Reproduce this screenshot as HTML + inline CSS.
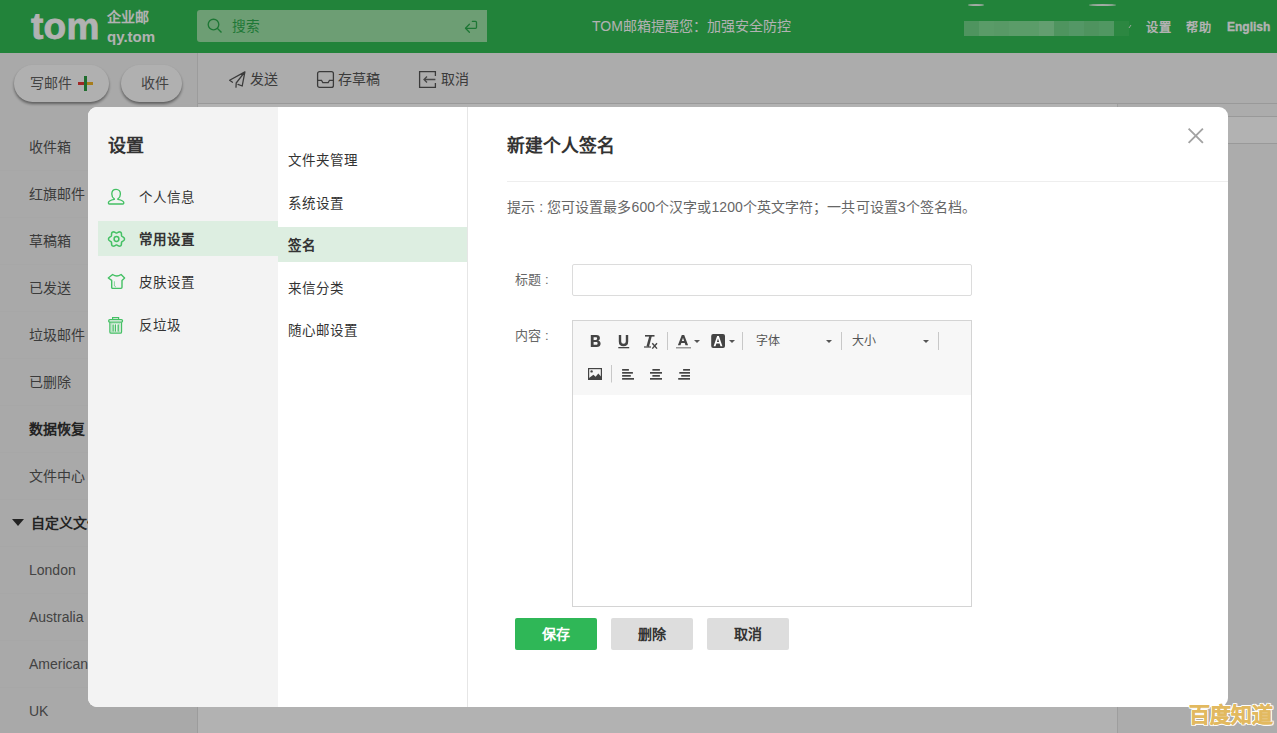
<!DOCTYPE html>
<html lang="zh-CN">
<head>
<meta charset="utf-8">
<style>
*{box-sizing:border-box;margin:0;padding:0}
html,body{width:1277px;height:733px;overflow:hidden;background:#fff;font-family:"Liberation Sans",sans-serif;color:#333}
.a{position:absolute;white-space:nowrap}
#hdr{position:absolute;left:0;top:0;width:1277px;height:53px;background:#31bc53}
.si{position:absolute;left:29px;font-size:14px;color:#555;line-height:20px;white-space:nowrap}
.sp{position:absolute;left:0;width:198px;height:1px;background:#f0f0f0}
.btn{position:absolute;top:65px;height:37px;border-radius:19px;background:#fdfdfd;box-shadow:0 2px 3px rgba(0,0,0,.45);font-size:14px;color:#606060;line-height:37px;white-space:nowrap}
.tbt{position:absolute;top:69px;font-size:14px;color:#555;line-height:20px;white-space:nowrap}
.mi{position:absolute;margin-top:1px;font-size:13.5px;letter-spacing:1px;color:#333;line-height:20px;white-space:nowrap}
.eb{position:absolute;font-size:12px;color:#555;line-height:16px}
.vs{position:absolute;width:1px;background:#ccc}
.caret{position:absolute;width:0;height:0;border-left:3px solid transparent;border-right:3px solid transparent;border-top:3px solid #555}
.bt{position:absolute;top:511px;width:82px;height:32px;border-radius:2px;font-size:14px;font-weight:bold;text-align:center;line-height:32px}
</style>
</head>
<body>
<!-- header -->
<div id="hdr">
  <div class="a" style="left:31px;top:0px;font-size:37px;font-weight:bold;color:#fff;letter-spacing:0.3px;line-height:53px;-webkit-text-stroke:0.8px #fff">tom</div>
  <div class="a" style="left:107px;top:9px;font-size:14px;font-weight:bold;color:#fff;line-height:16px">企业邮</div>
  <div class="a" style="left:107px;top:28px;font-size:15px;font-weight:bold;color:#fff;line-height:17px">qy.tom</div>
  <div class="a" style="left:197px;top:10px;width:290px;height:32px;background:#9de2a6;border-radius:3px 0 0 3px"></div>
  <svg class="a" style="left:205px;top:17px" width="20" height="18" viewBox="0 0 20 18"><circle cx="8.5" cy="7.5" r="5.3" fill="none" stroke="#2aab4c" stroke-width="1.35"/><line x1="12.3" y1="11.3" x2="16.5" y2="15.5" stroke="#2aab4c" stroke-width="1.35"/></svg>
  <div class="a" style="left:232px;top:17px;font-size:13.7px;color:#2cad4e;line-height:20px">搜索</div>
  <svg class="a" style="left:462px;top:19px" width="18" height="16" viewBox="0 0 18 16"><path d="M10.4,2.4 H13.5 Q14.5,2.4 14.5,3.4 V8.3 Q14.5,9.3 13.5,9.3 H3.6" fill="none" stroke="#2aab4c" stroke-width="1.3" stroke-linecap="round"/><path d="M7.4,5.3 L3.5,9.3 L7.4,13.3" fill="none" stroke="#2aab4c" stroke-width="1.3" stroke-linecap="round" stroke-linejoin="round"/></svg>
  <div class="a" style="left:592px;top:16px;font-size:14px;color:#fff;line-height:20px">TOM邮箱提醒您：加强安全防控</div>
  <div class="a" style="left:964px;top:21px;width:15px;height:15px;background:#71d589"></div><div class="a" style="left:979px;top:21px;width:15px;height:15px;background:#81df96"></div><div class="a" style="left:994px;top:21px;width:15px;height:15px;background:#7edc93"></div><div class="a" style="left:1009px;top:21px;width:15px;height:15px;background:#83e097"></div><div class="a" style="left:1024px;top:21px;width:15px;height:15px;background:#83e097"></div><div class="a" style="left:1039px;top:21px;width:15px;height:15px;background:#8fe3a1"></div><div class="a" style="left:1054px;top:21px;width:15px;height:15px;background:#71d589"></div><div class="a" style="left:1069px;top:21px;width:15px;height:15px;background:#79d992"></div><div class="a" style="left:1084px;top:21px;width:15px;height:15px;background:#71d389"></div><div class="a" style="left:1099px;top:21px;width:15px;height:15px;background:#75d88d"></div><div class="a" style="left:1114px;top:21px;width:15px;height:15px;background:#40c25e"></div>
  <div class="a" style="left:968px;top:4px;width:16px;height:2px;border-radius:50%;background:#e8f5ea"></div><div class="a" style="left:1089px;top:4px;width:27px;height:2px;border-radius:50%;background:#e8f5ea"></div>
  <svg class="a" style="left:1127px;top:23px" width="6" height="6" viewBox="0 0 6 6"><path d="M2,5 L4,2" stroke="#e0f0e0" stroke-width="1"/></svg>
  <div class="a" style="left:1146px;top:20px;font-size:12.2px;letter-spacing:0.8px;font-weight:bold;color:#fff;line-height:17px">设置</div>
  <div class="a" style="left:1186px;top:20px;font-size:12.2px;letter-spacing:0.8px;font-weight:bold;color:#fff;line-height:17px">帮助</div>
  <div class="a" style="left:1227px;top:19px;font-size:12px;font-weight:bold;color:#fff;line-height:17px;-webkit-text-stroke:0.3px #fff">English</div>
</div>
<!-- sidebar -->
<div class="a" style="left:0;top:53px;width:198px;height:680px;background:#f3f3f3;border-right:1px solid #e0e0e0"></div>
<div class="btn" style="left:14px;width:95px;padding-left:16px">写邮件</div>
<div class="a" style="left:78px;top:82px;width:6px;height:3px;background:#e53935"></div>
<div class="a" style="left:84px;top:76px;width:3px;height:15px;background:#2e9e43"></div>
<div class="a" style="left:87px;top:82px;width:6px;height:3px;background:#f0b429"></div>
<div class="btn" style="left:121px;width:61px;padding-left:20px">收件</div>
<div class="si" style="top:137px">收件箱</div>
<div class="sp" style="top:170px"></div>
<div class="si" style="top:184px">红旗邮件</div>
<div class="sp" style="top:217px"></div>
<div class="si" style="top:231px">草稿箱</div>
<div class="sp" style="top:264px"></div>
<div class="si" style="top:278px">已发送</div>
<div class="sp" style="top:311px"></div>
<div class="si" style="top:325px">垃圾邮件</div>
<div class="sp" style="top:358px"></div>
<div class="si" style="top:372px">已删除</div>
<div class="sp" style="top:405px"></div>
<div class="si" style="top:419px;font-weight:bold;color:#333">数据恢复</div>
<div class="sp" style="top:452px"></div>
<div class="si" style="top:466px">文件中心</div>
<div class="sp" style="top:499px"></div>
<div class="a" style="left:12px;top:519px;width:0;height:0;border-left:6px solid transparent;border-right:6px solid transparent;border-top:7px solid #333"></div>
<div class="si" style="top:513px;left:31px;font-weight:bold;color:#333">自定义文件夹</div>
<div class="sp" style="top:546px"></div>
<div class="si" style="top:560px;color:#606060">London</div>
<div class="sp" style="top:593px"></div>
<div class="si" style="top:607px;color:#606060">Australia</div>
<div class="sp" style="top:640px"></div>
<div class="si" style="top:654px;color:#606060">American</div>
<div class="sp" style="top:687px"></div>
<div class="si" style="top:701px;color:#606060">UK</div>
<!-- toolbar -->
<div class="a" style="left:198px;top:53px;width:1079px;height:51px;background:#f7f7f7;border-bottom:1px solid #dcdcdc"></div>
<svg class="a" style="left:226px;top:68px" width="22" height="22" viewBox="0 0 22 22"><path d="M18.9,3.9 L3.6,12.3 L6.5,14.2 M18.9,3.9 L10.2,15 L10,19.2 M18.9,3.9 L16.2,18 L12,16.4" fill="none" stroke="#555" stroke-width="1.3" stroke-linejoin="round" stroke-linecap="round"/></svg>
<div class="tbt" style="left:250px">发送</div>
<svg class="a" style="left:316px;top:70px" width="19" height="19" viewBox="0 0 19 19"><rect x="1.6" y="1.6" width="15.8" height="15.8" rx="2" fill="none" stroke="#555" stroke-width="1.3"/><path d="M1.6,10.3 H5.5 L6.8,12.6 H12.2 L13.5,10.3 H17.4" fill="none" stroke="#555" stroke-width="1.3"/></svg>
<div class="tbt" style="left:338px">存草稿</div>
<svg class="a" style="left:418px;top:70px" width="19" height="19" viewBox="0 0 19 19"><path d="M17.4,6 V1.6 H1.6 V17.4 H17.4 V13" fill="none" stroke="#555" stroke-width="1.3"/><path d="M17.4,9.5 H6 M9,6.5 L6,9.5 L9,12.5" fill="none" stroke="#666" stroke-width="1.3"/></svg>
<div class="tbt" style="left:441px">取消</div>
<!-- right panel -->
<div class="a" style="left:1117px;top:104px;width:160px;height:629px;background:#f7f7f7;border-left:1px solid #e2e2e2"></div>
<div class="a" style="left:1118px;top:116px;width:159px;height:28px;background:#fff;border-top:1px solid #dcdcdc;border-bottom:1px solid #dcdcdc"></div>

<!-- overlay -->
<div class="a" style="left:0;top:0;width:1277px;height:733px;background:rgba(0,0,0,.3)"></div>

<!-- modal -->
<div class="a" style="left:88px;top:107px;width:1140px;height:600px;background:#fff;border-radius:9px;overflow:hidden">
  <div class="a" style="left:0;top:0;width:190px;height:600px;background:#f3f3f3"></div>
  <div class="a" style="left:190px;top:0;width:190px;height:600px;border-right:1px solid #e6e6e6"></div>
  <div class="a" style="left:20px;top:28px;font-size:18px;font-weight:bold;color:#333;line-height:22px">设置</div>
  <div class="a" style="left:10px;top:114px;width:180px;height:35px;background:#ddeee1"></div>
  <!-- icons -->
  <svg class="a" style="left:19px;top:81px" width="18" height="18" viewBox="0 0 18 18"><path d="M9.1,1.4 C6.3,1.4 4.8,3.4 4.8,5.9 C4.8,8.1 5.8,9.9 7.3,10.9 V11.4 C4.6,12 1.4,12.7 1.4,14.7 V15.1 Q1.4,16 2.3,16 H15.9 Q16.8,16 16.8,15.1 V14.7 C16.8,12.7 13.6,12 10.9,11.4 V10.9 C12.4,9.9 13.4,8.1 13.4,5.9 C13.4,3.4 11.9,1.4 9.1,1.4 Z" fill="none" stroke="#44c064" stroke-width="1.35" stroke-linejoin="round"/></svg>
  <svg class="a" style="left:19px;top:123px" width="19" height="18" viewBox="0 0 19 18"><path d="M17.50,9.00 L17.44,9.42 L17.27,9.82 L16.99,10.19 L16.65,10.52 L16.26,10.81 L15.86,11.07 L15.49,11.30 L15.16,11.52 L14.89,11.75 L14.70,12.00 L14.57,12.29 L14.51,12.64 L14.48,13.04 L14.47,13.48 L14.45,13.95 L14.39,14.43 L14.28,14.90 L14.09,15.32 L13.83,15.67 L13.50,15.93 L13.11,16.08 L12.68,16.13 L12.22,16.08 L11.76,15.95 L11.31,15.76 L10.89,15.54 L10.50,15.33 L10.15,15.16 L9.82,15.04 L9.50,15.00 L9.18,15.04 L8.85,15.16 L8.50,15.33 L8.11,15.54 L7.69,15.76 L7.24,15.95 L6.78,16.08 L6.32,16.13 L5.89,16.08 L5.50,15.93 L5.17,15.67 L4.91,15.32 L4.72,14.90 L4.61,14.43 L4.55,13.95 L4.53,13.48 L4.52,13.04 L4.49,12.64 L4.43,12.29 L4.30,12.00 L4.11,11.75 L3.84,11.52 L3.51,11.30 L3.14,11.07 L2.74,10.81 L2.35,10.52 L2.01,10.19 L1.73,9.82 L1.56,9.42 L1.50,9.00 L1.56,8.58 L1.73,8.18 L2.01,7.81 L2.35,7.48 L2.74,7.19 L3.14,6.93 L3.51,6.70 L3.84,6.48 L4.11,6.25 L4.30,6.00 L4.43,5.71 L4.49,5.36 L4.52,4.96 L4.53,4.52 L4.55,4.05 L4.61,3.57 L4.72,3.10 L4.91,2.68 L5.17,2.33 L5.50,2.07 L5.89,1.92 L6.32,1.87 L6.78,1.92 L7.24,2.05 L7.69,2.24 L8.11,2.46 L8.50,2.67 L8.85,2.84 L9.18,2.96 L9.50,3.00 L9.82,2.96 L10.15,2.84 L10.50,2.67 L10.89,2.46 L11.31,2.24 L11.76,2.05 L12.22,1.92 L12.68,1.87 L13.11,1.92 L13.50,2.07 L13.83,2.33 L14.09,2.68 L14.28,3.10 L14.39,3.57 L14.45,4.05 L14.47,4.52 L14.48,4.96 L14.51,5.36 L14.57,5.71 L14.70,6.00 L14.89,6.25 L15.16,6.48 L15.49,6.70 L15.86,6.93 L16.26,7.19 L16.65,7.48 L16.99,7.81 L17.27,8.18 L17.44,8.58 L17.50,9.00Z" fill="none" stroke="#44c064" stroke-width="1.5"/><circle cx="9.5" cy="9" r="2.4" fill="none" stroke="#44c064" stroke-width="1.5"/></svg>
  <svg class="a" style="left:19px;top:166px" width="19" height="19" viewBox="0 0 19 19"><path d="M5.6,1.5 Q9.9,4.4 14.1,1.5 L17.6,5 L15,7.4 V14.3 Q15,15.4 14,15.4 H5.7 Q4.7,15.4 4.7,14.3 V7.4 L1.3,5 Z" fill="none" stroke="#44c064" stroke-width="1.4" stroke-linejoin="round"/><path d="M7.4,8.3 V13 L9,14" fill="none" stroke="#44c064" stroke-width="1" opacity="0.6"/></svg>
  <svg class="a" style="left:19px;top:209px" width="18" height="19" viewBox="0 0 18 19"><path d="M5.6,3.6 V1.7 H11.6 V3.6" fill="none" stroke="#44c064" stroke-width="1.2"/><rect x="1.7" y="3.7" width="13.8" height="2.5" rx="1.1" fill="none" stroke="#44c064" stroke-width="1.3"/><path d="M2.9,6.2 V16 Q2.9,17.2 4.1,17.2 H13.3 Q14.5,17.2 14.5,16 V6.2" fill="none" stroke="#44c064" stroke-width="1.3"/><rect x="4.6" y="7.4" width="8.2" height="8.5" fill="none" stroke="#44c064" stroke-width="0.6" opacity="0.45"/><path d="M6.1,9 V15 M8.4,9 V15 M11.2,9 V15" stroke="#44c064" stroke-width="1.3" stroke-linecap="round"/></svg>
  <div class="mi" style="left:51px;top:80px">个人信息</div>
  <div class="mi" style="left:51px;top:122px;font-weight:bold">常用设置</div>
  <div class="mi" style="left:51px;top:165px">皮肤设置</div>
  <div class="mi" style="left:51px;top:208px">反垃圾</div>
  <!-- middle menu -->
  <div class="a" style="left:190px;top:120px;width:189px;height:35px;background:#ddeee1"></div>
  <div class="mi" style="left:200px;top:43px">文件夹管理</div>
  <div class="mi" style="left:200px;top:86px">系统设置</div>
  <div class="mi" style="left:200px;top:128px;font-weight:bold">签名</div>
  <div class="mi" style="left:200px;top:171px">来信分类</div>
  <div class="mi" style="left:200px;top:213px">随心邮设置</div>
  <!-- content -->
  <div class="a" style="left:419px;top:28px;font-size:17.8px;font-weight:bold;color:#333;line-height:22px">新建个人签名</div>
  <svg class="a" style="left:1098px;top:19px" width="21" height="21" viewBox="0 0 21 21"><path d="M2.6,2.6 L16.9,16.9 M16.9,2.6 L2.6,16.9" stroke="#a3a3a3" stroke-width="1.9"/></svg>
  <div class="a" style="left:419px;top:74px;width:721px;height:1px;background:#eeeeee"></div>
  <div class="a" style="left:419px;top:90px;font-size:14px;color:#666;line-height:20px;letter-spacing:0.08px">提示 : 您可设置最多600个汉字或1200个英文字符；一共可设置3个签名档。</div>
  <div class="a" style="left:427px;top:163px;font-size:13px;color:#666;line-height:20px">标题<span style="margin-left:4px">:</span></div>
  <div class="a" style="left:484px;top:157px;width:400px;height:32px;border:1px solid #dcdcdc;border-radius:2px"></div>
  <div class="a" style="left:427px;top:219px;font-size:13px;color:#666;line-height:20px">内容<span style="margin-left:4px">:</span></div>
  <div class="a" style="left:484px;top:213px;width:400px;height:287px;border:1px solid #d4d4d4"></div>
  <div class="a" style="left:485px;top:214px;width:398px;height:74px;background:#f7f7f7"></div>
  <svg class="a" style="left:484px;top:213px" width="400" height="76" viewBox="0 0 400 76">
    <g fill="#444">
      <path fill-rule="evenodd" d="M18.8,15 H24.4 C26.8,15 27.9,16.3 27.9,18 C27.9,19.3 27.2,20.2 26.2,20.6 C27.6,21 28.6,22.1 28.6,23.7 C28.6,25.7 27.1,27 24.7,27 H18.8 Z M21.6,17.3 V19.9 H23.9 C24.7,19.9 25.1,19.4 25.1,18.6 C25.1,17.8 24.7,17.3 23.9,17.3 Z M21.6,22.1 V24.7 H24.2 C25.1,24.7 25.6,24.2 25.6,23.4 C25.6,22.6 25.1,22.1 24.2,22.1 Z"/>
      <rect x="46.3" y="27" width="10.9" height="1.3"/>
      <rect x="72" y="26.4" width="7" height="1.2"/>
      <rect x="73" y="15" width="9.5" height="1.6"/>
    </g>
    <path d="M48,15 V21.4 C48,23.9 49.4,25 51.5,25 C53.6,25 55,23.9 55,21.4 V15" fill="none" stroke="#444" stroke-width="2.4"/>
    <path d="M78.7,15.5 L75.7,26.6" stroke="#444" stroke-width="2.5"/>
    <path d="M80.3,23.2 L85,28.6 M85,23.2 L80.3,28.6" stroke="#444" stroke-width="1.4"/>
    <rect x="95" y="12" width="1" height="18" fill="#c8c8c8"/>
    <path fill-rule="evenodd" d="M105.9,25.3 L109.8,15 H112.2 L116.1,25.3 H113.5 L112.7,23.1 H109.3 L108.5,25.3 Z M109.9,21.1 H112.1 L111,17.8 Z" fill="#444"/>
    <rect x="104" y="27" width="15" height="1.5" fill="#999"/>
    <path d="M122,20 H128 L125,23 Z" fill="#555"/>
    <rect x="139.2" y="14" width="13.8" height="14" rx="2" fill="#444"/>
    <path fill-rule="evenodd" d="M141.6,26.2 L145.1,16 H146.9 L150.4,26.2 H148.5 L147.6,23.6 H144.4 L143.5,26.2 Z M144.9,21.9 H147.1 L146,18.6 Z" fill="#fff"/>
    <path d="M157,20 H163 L160,23 Z" fill="#555"/>
    <rect x="170" y="12" width="1" height="18" fill="#c8c8c8"/>
    <path d="M254,20 H260 L257,23 Z" fill="#555"/>
    <rect x="269" y="12" width="1" height="18" fill="#c8c8c8"/>
    <path d="M351,20 H357 L354,23 Z" fill="#555"/>
    <rect x="366" y="12" width="1" height="18" fill="#c8c8c8"/>
    <rect x="16.6" y="48.6" width="12.8" height="10.8" fill="none" stroke="#444" stroke-width="1.2"/>
    <circle cx="19.6" cy="51.4" r="1.2" fill="#444"/>
    <path d="M17,59.2 V58 L21.4,54.8 L23.6,56.8 L26.3,53.5 L29,56.6 V59.2 Z" fill="#444"/>
    <rect x="39" y="45" width="1" height="17.5" fill="#c8c8c8"/>
    <g fill="#444">
      <rect x="50.1" y="49" width="6.8" height="1.7"/><rect x="50.1" y="52" width="10.8" height="1.7"/><rect x="50.1" y="55" width="8.7" height="1.7"/><rect x="50.1" y="58" width="11.9" height="1.7"/>
      <rect x="80.4" y="49" width="7.5" height="1.7"/><rect x="78" y="52" width="12" height="1.7"/><rect x="80.4" y="55" width="7.5" height="1.7"/><rect x="78" y="58" width="12" height="1.7"/>
      <rect x="111.1" y="49" width="6.9" height="1.7"/><rect x="107.3" y="52" width="10.7" height="1.7"/><rect x="109.2" y="55" width="8.8" height="1.7"/><rect x="106.2" y="58" width="11.8" height="1.7"/>
    </g>
  </svg>
  <div class="a" style="left:668px;top:226px;font-size:12px;color:#555;line-height:16px">字体</div>
  <div class="a" style="left:764px;top:226px;font-size:12px;color:#555;line-height:16px">大小</div>
  <div class="bt" style="left:427px;background:#2fb757;color:#fff">保存</div>
  <div class="bt" style="left:523px;background:#dddddd;color:#333">删除</div>
  <div class="bt" style="left:619px;background:#dddddd;color:#333">取消</div>
</div>
<div class="a" style="left:1189px;top:701px;font-size:21px;font-weight:900;color:#e2b95f;line-height:28px;letter-spacing:0px;-webkit-text-stroke:0.4px #e2b95f;text-shadow:1px 0 0 #fff,-1px 0 0 #fff,0 1px 0 #fff,0 -1px 0 #fff,1px 1px 0 #fff,-1px -1px 0 #fff,1px -1px 0 #fff,-1px 1px 0 #fff">百度知道</div>
</body>
</html>
